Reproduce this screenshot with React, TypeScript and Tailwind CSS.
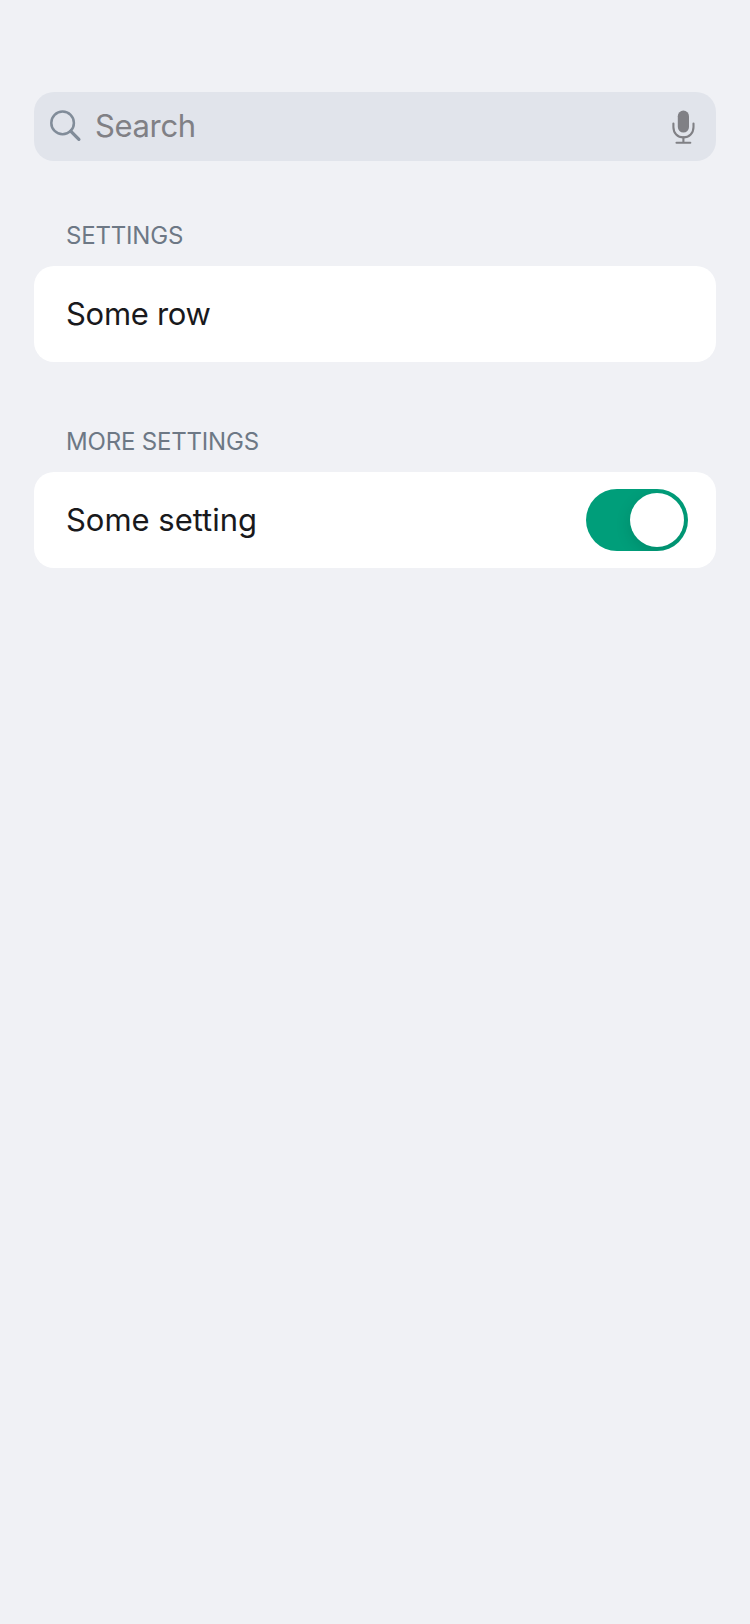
import { useState } from 'react';
import type { ReactNode } from 'react';

function SearchIcon() {
  return (
    <svg className="h-8 w-8 shrink-0 overflow-visible" viewBox="0 0 32 32" fill="none" stroke="#818c99" strokeLinecap="round">
      <circle cx="12.6" cy="11.9" r="11.3" strokeWidth="2.5" />
      <path d="M20.7 20.1L28.9 28.3" strokeWidth="3.3" />
    </svg>
  );
}

function MicIcon() {
  return (
    <svg className="h-[35px] w-[23px] shrink-0" viewBox="0 0 23 35" fill="none" stroke="#808085" strokeWidth="2.1" strokeLinecap="round">
      <rect x="5.8" y="1.6" width="11.2" height="22" rx="5.6" fill="#808085" stroke="none" />
      <path d="M1.4 14.6V18C1.4 24 5.5 28.4 11.4 28.4S21.5 24 21.5 18V14.6" />
      <path d="M11.4 28.4V33.7M4.5 33.7H18.3" />
    </svg>
  );
}

function Section({ title, children }: { title: string; children: ReactNode }) {
  return (
    <section className="mb-[64px]">
      <h2 className="mb-[14px] pl-8 text-[24px] leading-8 tracking-[-0.18px] text-[#6d7885]">{title}</h2>
      <div className="flex h-24 items-center justify-between rounded-[20px] bg-white pr-7 pl-8">{children}</div>
    </section>
  );
}

function Switch() {
  const [on, setOn] = useState(true);
  return (
    <button
      role="switch"
      aria-checked={on}
      aria-label="Some setting"
      onClick={() => setOn(!on)}
      className={`flex h-[62px] w-[102px] items-center overflow-hidden rounded-full p-1 ${on ? 'justify-end bg-[#009e7a]' : 'justify-start bg-[#e1e3e6]'}`}
    >
      <span className="size-[54px] rounded-full bg-white shadow-[0_5px_16px_rgba(0,0,0,0.12)]" />
    </button>
  );
}

export default function App() {
  return (
    <main className="min-h-[1624px] bg-[#f0f1f5] px-[34px] pt-[92px] font-['Inter',sans-serif] text-[31px] text-[#19191c]">
      <div className="mb-[59px] flex h-[69px] items-center rounded-[20px] bg-[#e1e4eb] pr-[21px] pl-4">
        <SearchIcon />
        <span className="ml-[13px] flex-1 tracking-[-0.35px] text-[#808085]">Search</span>
        <MicIcon />
      </div>
      <Section title="SETTINGS">
        <span className="tracking-[-0.3px]">Some row</span>
      </Section>
      <Section title="MORE SETTINGS">
        <span className="tracking-[-0.02px]">Some setting</span>
        <Switch />
      </Section>
    </main>
  );
}
